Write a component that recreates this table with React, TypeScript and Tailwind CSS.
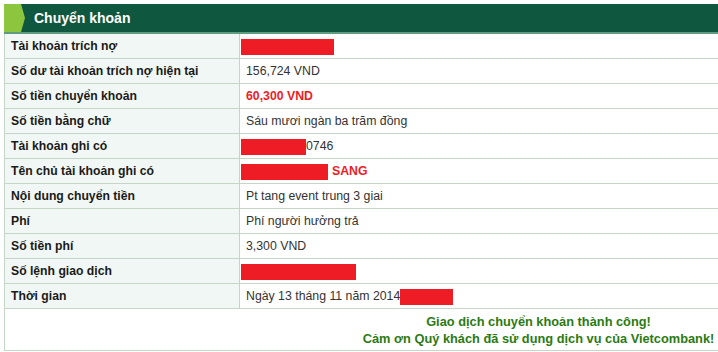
import React from "react";

const Redact = ({ w }: { w: number }) => (
  <span className="inline-block h-[16px] bg-[#ee1c25] align-middle" style={{ width: w }} />
);

const rows: { label: string; value: React.ReactNode }[] = [
  {
    label: "Tài khoản trích nợ",
    value: (
      <span className="-ml-[5px] flex items-center">
        <Redact w={93} />
      </span>
    ),
  },
  { label: "Số dư tài khoản trích nợ hiện tại", value: "156,724 VND" },
  {
    label: "Số tiền chuyển khoản",
    value: <span className="font-bold text-[#ee1c25]">60,300 VND</span>,
  },
  { label: "Số tiền bằng chữ", value: "Sáu mươi ngàn ba trăm đồng" },
  {
    label: "Tài khoản ghi có",
    value: (
      <span className="-ml-[5px] flex items-center">
        <Redact w={65} />
        0746
      </span>
    ),
  },
  {
    label: "Tên chủ tài khoản ghi có",
    value: (
      <span className="-ml-[5px] flex items-center gap-[4px]">
        <Redact w={87} />
        <span className="font-bold text-[#ee1c25]">SANG</span>
      </span>
    ),
  },
  { label: "Nội dung chuyển tiền", value: "Pt tang event trung 3 giai" },
  { label: "Phí", value: "Phí người hưởng trả" },
  { label: "Số tiền phí", value: "3,300 VND" },
  {
    label: "Số lệnh giao dịch",
    value: (
      <span className="-ml-[5px] flex items-center">
        <Redact w={115} />
      </span>
    ),
  },
  {
    label: "Thời gian",
    value: (
      <span className="flex items-center">
        Ngày 13 tháng 11 năm 2014
        <Redact w={53} />
      </span>
    ),
  },
];

export default function App() {
  return (
    <div
      className="w-[718px] h-[352px] overflow-hidden bg-white pl-[4px] pt-[4px]"
      style={{ fontFamily: '"Liberation Sans", Arial, sans-serif' }}
    >
      <div className="w-[1068px]">
        <div className="flex h-[30px] items-stretch border-b-2 border-[#5f9b80] bg-[#10573f]">
          <svg width="22" height="28" viewBox="0 0 22 28" className="shrink-0">
            <polygon points="0,0 17,0 21,14 17,28 0,28" fill="#8cc63f" />
          </svg>
          <span className="ml-[8px] flex items-center text-[14px] font-bold text-white">
            Chuyển khoản
          </span>
        </div>
        <div className="border-l border-[#c5d6c9]">
          {rows.map((r) => (
            <div key={r.label} className="flex h-[25px] border-b border-[#c5d6c9]">
              <div className="flex w-[235px] shrink-0 items-center border-r border-[#c5d6c9] bg-[#f1f7f4] pl-[6px] pt-[1px] text-[12.2px] font-bold text-[#1a1a1a]">
                {r.label}
              </div>
              <div className="flex items-center pl-[6px] pt-[1px] text-[12.3px] text-[#333]">
                {r.value}
              </div>
            </div>
          ))}
          <div className="flex h-[42px] flex-col items-center justify-center border-b border-[#c5d6c9] text-[12.8px] font-bold leading-[17px] text-[#2b7a12]">
            <div>Giao dịch chuyển khoản thành công!</div>
            <div>Cảm ơn Quý khách đã sử dụng dịch vụ của Vietcombank!</div>
          </div>
        </div>
      </div>
    </div>
  );
}
